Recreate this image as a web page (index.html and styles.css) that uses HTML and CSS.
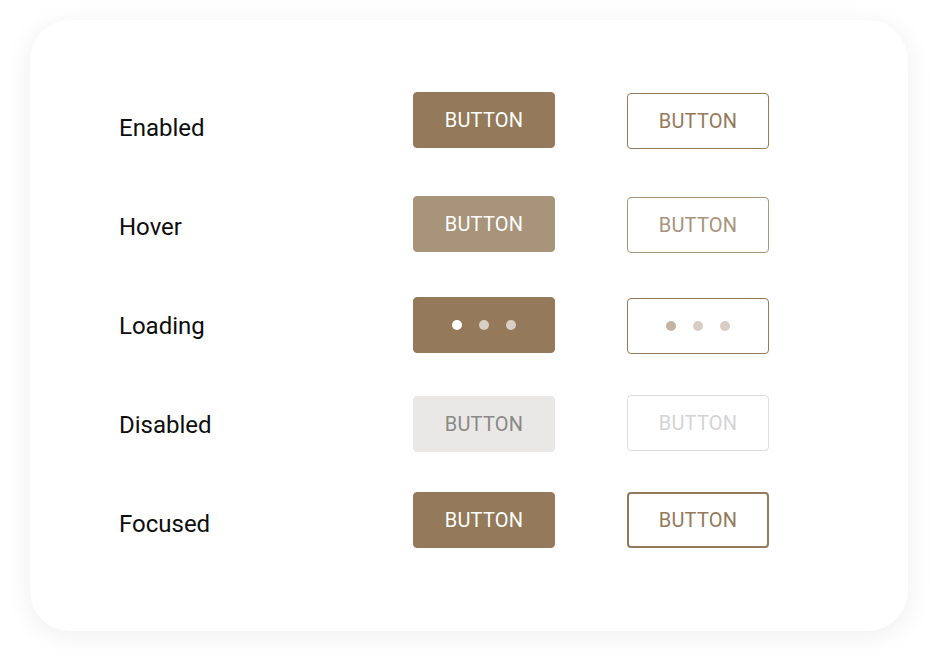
FILE: index.html
```html
<!DOCTYPE html>
<html lang="en">
<head>
<meta charset="utf-8">
<title>Button states</title>
<link rel="stylesheet" href="styles.css">
</head>
<body>
<div class="card">
  <div class="grid">
    <div class="row r-enabled">
      <div class="label">Enabled</div>
      <button class="btn filled">BUTTON</button>
      <button class="btn outline">BUTTON</button>
    </div>
    <div class="row r-hover">
      <div class="label">Hover</div>
      <button class="btn filled hover">BUTTON</button>
      <button class="btn outline hover">BUTTON</button>
    </div>
    <div class="row r-loading">
      <div class="label">Loading</div>
      <button class="btn filled"><span class="dots"><i class="dot on"></i><i class="dot"></i><i class="dot"></i></span></button>
      <button class="btn outline"><span class="dots"><i class="dot on"></i><i class="dot"></i><i class="dot"></i></span></button>
    </div>
    <div class="row r-disabled">
      <div class="label">Disabled</div>
      <button class="btn filled disabled">BUTTON</button>
      <button class="btn outline disabled">BUTTON</button>
    </div>
    <div class="row r-focused">
      <div class="label">Focused</div>
      <button class="btn filled">BUTTON</button>
      <button class="btn outline focused">BUTTON</button>
    </div>
  </div>
</div>
</body>
</html>
```
FILE: styles.css
```css
html, body {
  margin: 0;
  padding: 0;
  background: #ffffff;
}
body {
  font-family: Roboto, "Liberation Sans", sans-serif;
  width: 938px;
  height: 671px;
  overflow: hidden;
}
.card {
  margin: 20px 0 0 30px;
  width: 878px;
  height: 611px;
  box-sizing: border-box;
  background: #fff;
  border-radius: 40px;
  box-shadow: 0 4px 28px rgba(0, 0, 0, 0.07);
  padding: 59px 0 0 89px;
}
.row {
  display: grid;
  grid-template-columns: 294px 142px 142px;
  height: 99px;
}
.label {
  font-size: 24px;
  line-height: 99px;
  color: #0d0d0d;
}
.btn {
  align-self: start;
  height: 56px;
  width: 142px;
  box-sizing: border-box;
  border-radius: 4px;
  font-family: Roboto, "Liberation Sans", sans-serif;
  font-size: 20px;
  font-weight: 400;
  letter-spacing: 0.2px;
  padding: 0;
  display: flex;
  align-items: center;
  justify-content: center;
  border: 1px solid transparent;
}
.filled {
  background: #94795a;
  color: #fff;
  border-color: #94795a;
}
.filled.hover {
  background: #a8937b;
  border-color: #a8937b;
}
.filled.disabled {
  background: #e9e8e6;
  border-color: #e9e8e6;
  color: #8a8987;
}
.outline {
  margin-left: 72px;
  background: #fff;
  color: #94795a;
  border-color: #94795a;
}
.outline.hover {
  color: #a8937b;
  border-color: #a8937b;
}
.outline.disabled {
  color: #d4d4d4;
  border-color: #dcdcdc;
}
.outline.focused {
  border-width: 2px;
}
.r-enabled .btn { margin-top: 13px; }
.r-enabled .outline { margin-top: 14px; }
.r-hover .btn { margin-top: 18px; }
.r-hover .outline { margin-top: 19px; }
.r-loading .btn { margin-top: 20px; }
.r-loading .outline { margin-top: 21px; }
.r-disabled .btn { margin-top: 20px; }
.r-disabled .outline { margin-top: 19px; }
.r-focused .btn { margin-top: 17px; }
.dots {
  display: flex;
  gap: 17px;
  align-items: center;
}
.dot {
  display: block;
  width: 10px;
  height: 10px;
  border-radius: 50%;
}
.filled .dot { background: #d9cfc5; }
.filled .dot.on { background: #ffffff; }
.outline .dot { background: #d8cdc2; }
.outline .dot.on { background: #c3b4a2; }
```
